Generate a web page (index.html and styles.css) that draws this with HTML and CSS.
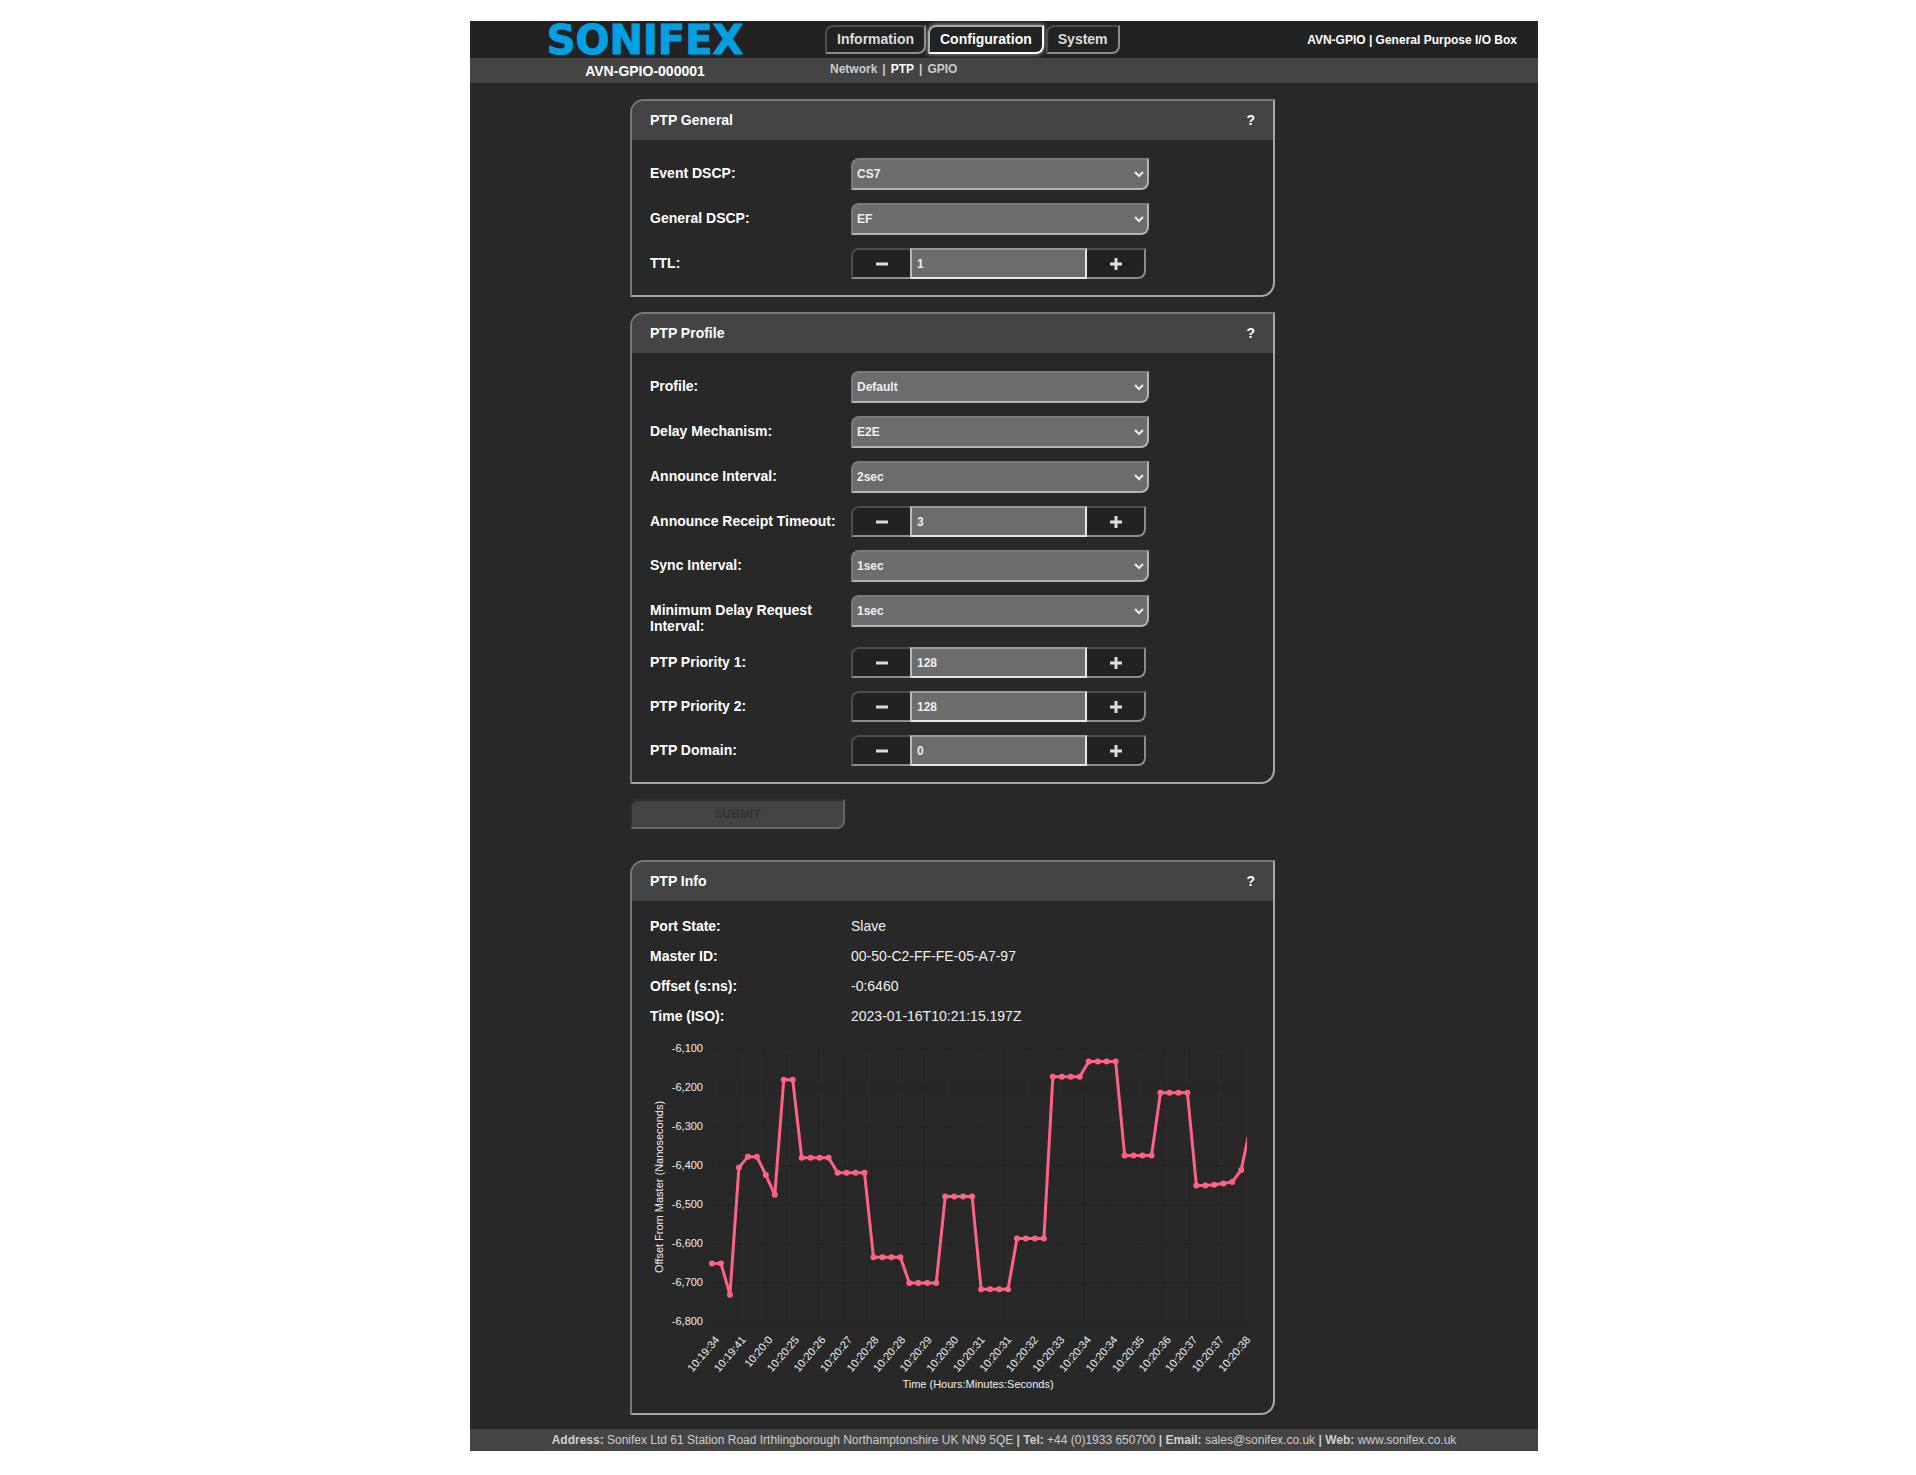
FILE: index.html
```
<!DOCTYPE html>
<html lang="en">
<head>
  <meta charset="UTF-8" />
  <meta name="viewport" content="width=device-width, initial-scale=1" />
  <title>AVN-GPIO - PTP Configuration</title>
  <link rel="stylesheet" href="styles.css">
</head>
<body>

<div class="shell">
  <header class="topbar">
    <a class="logo" href="#">SONIFEX</a>
    <nav class="tabs" aria-label="Main">
      <a class="tab" href="#">Information</a>
      <a class="tab active" href="#" aria-current="page">Configuration</a>
      <a class="tab" href="#">System</a>
    </nav>
    <div class="product">AVN-GPIO | General Purpose I/O Box</div>
  </header>

  <div class="subbar">
    <div class="device">AVN-GPIO-000001</div>
    <nav class="subnav" aria-label="Configuration">
      <a href="#">Network</a>
      <span>|</span>
      <a class="current" href="#" aria-current="page">PTP</a>
      <span>|</span>
      <a href="#">GPIO</a>
    </nav>
  </div>

  <main>
    <form id="ptp-form">
      <section class="panel">
        <div class="panel-head">
          <h2>PTP General</h2>
          <button type="button" class="help" title="Help">?</button>
        </div>
        <div class="panel-body">
          <div class="row">
            <label for="event-dscp">Event DSCP:</label>
            <select id="event-dscp"><option>CS7</option></select>
          </div>
          <div class="row">
            <label for="general-dscp">General DSCP:</label>
            <select id="general-dscp"><option>EF</option></select>
          </div>
          <div class="row">
            <label for="ttl">TTL:</label>
            <div class="stepper">
              <button type="button" class="minus" aria-label="Decrease"><svg viewBox="0 0 12 12"><path d="M0 6h12" /></svg></button>
              <input type="text" id="ttl" value="1" />
              <button type="button" class="plus" aria-label="Increase"><svg viewBox="0 0 12 12"><path d="M0 6h12M6 0v12" /></svg></button>
            </div>
          </div>
        </div>
      </section>

      <section class="panel">
        <div class="panel-head">
          <h2>PTP Profile</h2>
          <button type="button" class="help" title="Help">?</button>
        </div>
        <div class="panel-body">
          <div class="row">
            <label for="profile">Profile:</label>
            <select id="profile"><option>Default</option></select>
          </div>
          <div class="row">
            <label for="delay">Delay Mechanism:</label>
            <select id="delay"><option>E2E</option></select>
          </div>
          <div class="row">
            <label for="announce">Announce Interval:</label>
            <select id="announce"><option>2sec</option></select>
          </div>
          <div class="row">
            <label for="timeout">Announce Receipt Timeout:</label>
            <div class="stepper">
              <button type="button" class="minus" aria-label="Decrease"><svg viewBox="0 0 12 12"><path d="M0 6h12" /></svg></button>
              <input type="text" id="timeout" value="3" />
              <button type="button" class="plus" aria-label="Increase"><svg viewBox="0 0 12 12"><path d="M0 6h12M6 0v12" /></svg></button>
            </div>
          </div>
          <div class="row">
            <label for="sync">Sync Interval:</label>
            <select id="sync"><option>1sec</option></select>
          </div>
          <div class="row">
            <label for="min-delay">Minimum Delay Request Interval:</label>
            <select id="min-delay"><option>1sec</option></select>
          </div>
          <div class="row">
            <label for="priority1">PTP Priority 1:</label>
            <div class="stepper">
              <button type="button" class="minus" aria-label="Decrease"><svg viewBox="0 0 12 12"><path d="M0 6h12" /></svg></button>
              <input type="text" id="priority1" value="128" />
              <button type="button" class="plus" aria-label="Increase"><svg viewBox="0 0 12 12"><path d="M0 6h12M6 0v12" /></svg></button>
            </div>
          </div>
          <div class="row">
            <label for="priority2">PTP Priority 2:</label>
            <div class="stepper">
              <button type="button" class="minus" aria-label="Decrease"><svg viewBox="0 0 12 12"><path d="M0 6h12" /></svg></button>
              <input type="text" id="priority2" value="128" />
              <button type="button" class="plus" aria-label="Increase"><svg viewBox="0 0 12 12"><path d="M0 6h12M6 0v12" /></svg></button>
            </div>
          </div>
          <div class="row">
            <label for="domain">PTP Domain:</label>
            <div class="stepper">
              <button type="button" class="minus" aria-label="Decrease"><svg viewBox="0 0 12 12"><path d="M0 6h12" /></svg></button>
              <input type="text" id="domain" value="0" />
              <button type="button" class="plus" aria-label="Increase"><svg viewBox="0 0 12 12"><path d="M0 6h12M6 0v12" /></svg></button>
            </div>
          </div>
        </div>
      </section>

      <button type="submit" class="submit" disabled>SUBMIT</button>
    </form>

    <section class="panel">
      <div class="panel-head">
        <h2>PTP Info</h2>
        <button type="button" class="help" title="Help">?</button>
      </div>
      <div class="info">
        <dl>
          <dt>Port State:</dt><dd>Slave</dd>
          <dt>Master ID:</dt><dd>00-50-C2-FF-FE-05-A7-97</dd>
          <dt>Offset (s:ns):</dt><dd>-0:6460</dd>
          <dt>Time (ISO):</dt><dd>2023-01-16T10:21:15.197Z</dd>
        </dl>
        <svg id="chart" class="chart" viewBox="0 0 605 366" role="img" aria-label="Offset from master over time"></svg>
      </div>
    </section>
  </main>

  <footer>
    <b>Address:</b> Sonifex Ltd 61 Station Road Irthlingborough Northamptonshire UK NN9 5QE <b>|</b>
    <b>Tel:</b> +44 (0)1933 650700 <b>|</b>
    <b>Email:</b> <a href="#">sales@sonifex.co.uk</a> <b>|</b>
    <b>Web:</b> <a href="#">www.sonifex.co.uk</a>
  </footer>
</div>

<script src="chart.js"></script>
</body>
</html>
```

FILE: styles.css
```
* { box-sizing: border-box; }
body {
  margin: 0; background: #fff; color: #fff;
  font-family: "Liberation Sans", Arial, sans-serif; font-size: 14px; line-height: 16px;
}
a { color: inherit; text-decoration: none; }
button, input, select { font-family: inherit; font-weight: bold; }

.shell {
  max-width: 1068px; background: #282828;
  margin: 21px auto 24px max(0px, calc(50vw - 488px));
}

/* Header */
.topbar, .subbar {
  display: grid; grid-template-columns: 350px 1fr auto; align-items: center;
}
.topbar { background: #222; height: 37px; padding-right: 21px; }
.subbar { background: #444; height: 25px; font-weight: bold; }
.logo {
  font-family: "DejaVu Sans", sans-serif; font-weight: bold; font-size: 40px;
  line-height: 36px; color: #00a0e3; text-align: center;
  -webkit-text-stroke: 1px #00a0e3;
}
.tabs { display: flex; gap: 2px; padding-left: 5px; }
.tab {
  padding: 4px 10px 5px; font-weight: bold; color: #ddd;
  border: 2px solid; border-color: #4c4c4c #8c8c8c #8c8c8c #4c4c4c;
  border-radius: 8px 0 8px 0;
}
.tab.active {
  color: #fff; border-color: #aaa #fff #fff #aaa; box-shadow: 0 0 5px #aaa;
}
.product { font-size: 12px; font-weight: bold; }
.device { text-align: center; }
.subnav {
  display: flex; gap: 5px; padding-left: 10px; padding-bottom: 4px;
  font-size: 12px; color: #ccc;
}
.subnav .current { color: #fff; }

/* Panels */
main { padding: 16px 16px 14px 160px; }
.panel {
  max-width: 645px; margin-bottom: 15px; overflow: hidden;
  border: 2px solid; border-color: #777 #a6a6a6 #a6a6a6 #777;
  border-radius: 14px 0 14px 0;
}
main > .panel { margin: 31px 0 0; }
.panel-head {
  display: flex; justify-content: space-between; align-items: center;
  height: 39px; padding: 0 18px 2px; background: #444;
}
.panel-head h2 { margin: 0; font-size: 14px; }
.help { padding: 0; border: 0; background: none; color: #fff; font-size: 14px; cursor: pointer; }
.panel-body {
  display: flex; flex-direction: column; gap: 13px; padding: 18px 18px 16px;
}
.row { display: flex; align-items: flex-start; }
.row label {
  flex: 0 0 201px; padding: 7px 8px 2px 0; margin-bottom: -2px; font-weight: bold;
}
.row select {
  flex: 0 1 298px; height: 32px; padding: 0; font-size: 12px;
  color: #eee; background: #6c6c6c;
  border: 2px solid; border-color: #7a7a7a #b4b4b4 #b4b4b4 #7a7a7a;
  border-radius: 8px 0 8px 0;
}
.stepper { flex: 0 1 295px; display: flex; height: 31px; }
.stepper button {
  flex: 0 0 59px; display: flex; align-items: center; justify-content: center;
  padding: 0; background: #222; cursor: pointer;
  border: 2px solid; border-color: #4c4c4c #8c8c8c #8c8c8c #4c4c4c;
}
.stepper .minus { border-right: 0; border-radius: 8px 0 0 0; }
.stepper .plus { border-left: 0; border-radius: 0 0 8px 0; }
.stepper svg { width: 12px; height: 12px; stroke: #ddd; stroke-width: 3; }
.stepper input {
  flex: 1; min-width: 0; padding: 0 5px; font-size: 12px; color: #eee;
  background: #6c6c6c; border: 2px solid; border-color: #999 #e6e6e6 #e6e6e6 #bbb;
  border-radius: 0;
}
.submit {
  display: block; width: 215px; height: 30px; font-size: 12px;
  background: #444; color: #333;
  border: 2px solid; border-color: #303030 #666 #666 #303030;
  border-radius: 8px 0 8px 0;
}

/* Info */
.info { padding: 10px 18px 16px; }
.info dl {
  display: grid; grid-template-columns: 201px 1fr; margin: 0; line-height: 30px;
}
.info dt { font-weight: bold; }
.info dd { margin: 0; color: #eee; }
.chart { display: block; width: 100%; height: auto; }
.chart text { font-size: 11px; fill: #eee; }
.chart .grid { stroke: #232323; }
.chart .line { fill: none; stroke: #ff6384; stroke-width: 3; }
.chart circle { fill: #ff6384; }

footer {
  padding: 3px 8px; background: #444; color: #ccc;
  font-size: 12px; text-align: center;
}

@media (max-width: 900px) {
  .topbar, .subbar { display: flex; flex-wrap: wrap; height: auto; gap: 8px; padding: 4px 8px; }
  main { padding: 16px; }
  .row { flex-wrap: wrap; }
}
```

FILE: chart.js
```
const times = [
  "10:19:34", "10:19:41", "10:20:0", "10:20:25", "10:20:26", "10:20:27", "10:20:28",
  "10:20:28", "10:20:29", "10:20:30", "10:20:31", "10:20:31", "10:20:32", "10:20:33",
  "10:20:34", "10:20:34", "10:20:35", "10:20:36", "10:20:37", "10:20:37", "10:20:38"
];

// [offset in ns, number of samples]
const runs = [
  [-6650, 2], [-6730, 1], [-6404, 1], [-6376, 2], [-6423, 1], [-6474, 1], [-6179, 2],
  [-6379, 4], [-6417, 4], [-6634, 4], [-6700, 4], [-6478, 4], [-6716, 4], [-6586, 4],
  [-6171, 4], [-6132, 4], [-6373, 4], [-6212, 4], [-6450, 2], [-6448, 1], [-6445, 1],
  [-6441, 1], [-6410, 1], [-6300, 1]
];
const offsets = runs.flatMap(([value, count]) => Array(count).fill(value));

const left = 62, right = 593, top_ = 18, bottom = 291;
const xTick = i => left + i * (right - left) / 20;
const xPoint = i => left + i * 8.97;
const y = v => top_ + (-6100 - v) * (bottom - top_) / 700;

let out = `<clipPath id="plot"><rect x="56" y="10" width="541" height="290" /></clipPath>`;

for (let v = -6100; v >= -6800; v -= 100) {
  out += `<path class="grid" d="M${left} ${y(v)}H${right}" />`;
  out += `<text x="53" y="${y(v) + 3}" text-anchor="end">${v.toLocaleString("en-US")}</text>`;
}

times.forEach((t, i) => {
  out += `<path class="grid" d="M${xTick(i)} ${top_}V${bottom}" />`;
  out += `<text text-anchor="end" transform="translate(${xTick(i) + 8} 309) rotate(-50)">${t}</text>`;
});

out += `<text x="328" y="357" text-anchor="middle">Time (Hours:Minutes:Seconds)</text>`;
out += `<text text-anchor="middle" transform="translate(13 156) rotate(-90)">Offset From Master (Nanoseconds)</text>`;

out += `<g clip-path="url(#plot)">`;
out += `<polyline class="line" points="${offsets.map((v, i) => xPoint(i) + "," + y(v)).join(" ")}" />`;
offsets.slice(0, -1).forEach((v, i) => {
  out += `<circle cx="${xPoint(i)}" cy="${y(v)}" r="3" />`;
});
out += `</g>`;

document.getElementById("chart").innerHTML = out;
```
